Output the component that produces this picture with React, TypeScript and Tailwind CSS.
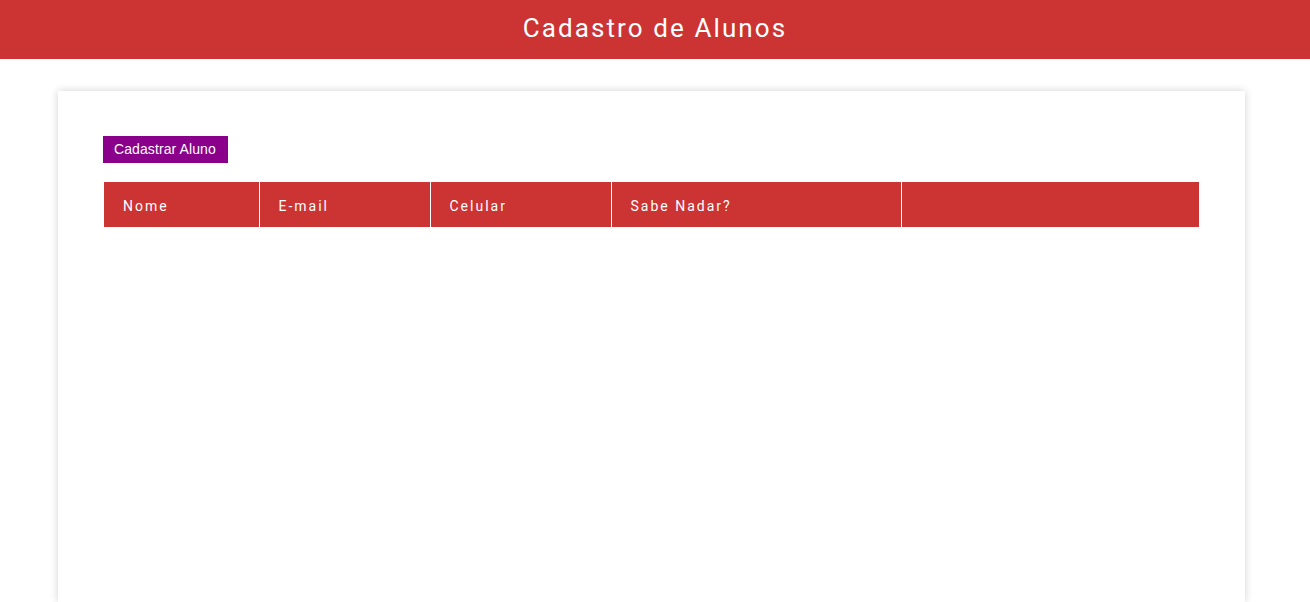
export default function App() {
    const cols = [
        { label: 'Nome', w: 'w-[155px]' },
        { label: 'E-mail', w: 'w-[171px]' },
        { label: 'Celular', w: 'w-[181px]' },
        { label: 'Sabe Nadar?', w: 'w-[290px]' },
        { label: '', w: '' },
    ];
    return (
        <div className="h-[602px] overflow-hidden bg-white font-['Roboto',sans-serif]">
            <header className="h-[59px] bg-[#cc3333] flex items-center justify-center">
                <h1 className="text-white text-[26px] tracking-[2.1px] leading-none pb-[4px]">Cadastro de Alunos</h1>
            </header>
            <main className="pl-[58px] pr-[65px] pt-[32px]">
                <div className="bg-white shadow-[0_0_8px_rgba(0,0,0,0.18)] min-h-[511px] pl-[45px] pr-[46px] pt-[45px]">
                    <button type="button" className="bg-[#8b008b] text-white text-[14px] tracking-[0.1px] font-['Liberation_Sans',sans-serif] h-[27px] pl-[11px] pr-[12px]">
                        Cadastrar Aluno
                    </button>
                    <table className="mt-[19px] ml-[1px] w-[1095px] border-collapse">
                        <thead>
                            <tr className="bg-[#cc3333] h-[45px]">
                                {cols.map((c, i) => (
                                    <th key={i} className={`${c.w} text-left font-normal text-white text-[14px] tracking-[2px] pl-[19px] pt-[3px] border-l border-white first:border-l-0`}>
                                        {c.label}
                                    </th>
                                ))}
                            </tr>
                        </thead>
                    </table>
                </div>
            </main>
        </div>
    );
}
